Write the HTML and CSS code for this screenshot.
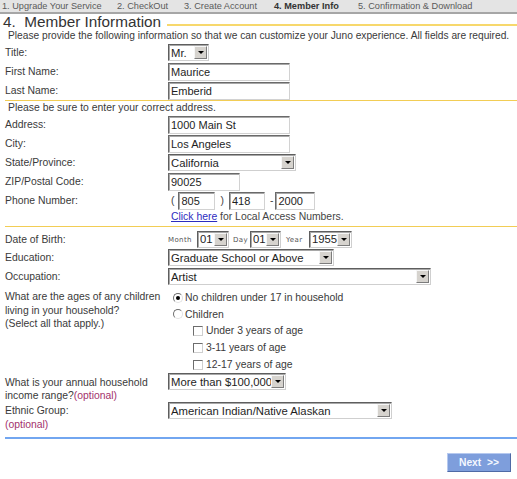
FILE: index.html
```html
<!DOCTYPE html>
<html lang="en">
<head>
<meta charset="utf-8">
<title>Member Information</title>
<link rel="stylesheet" href="styles.css">
</head>
<body>
<div class="steps">
  <span class="step s1">1. Upgrade Your Service</span>
  <span class="step s2">2. CheckOut</span>
  <span class="step s3">3. Create Account</span>
  <span class="step s4 current">4. Member Info</span>
  <span class="step s5">5. Confirmation &amp; Download</span>
</div>

<div class="heading">
  <h1>4.&nbsp; Member Information</h1>
  <span class="rule"></span>
</div>
<p class="intro">Please provide the following information so that we can customize your Juno experience. All fields are required.</p>

<form class="form">
  <div class="row">
    <span class="lbl">Title:</span>
    <span class="sel w-title"><span class="val">Mr.</span><span class="arr"></span></span>
  </div>
  <div class="row">
    <span class="lbl">First Name:</span>
    <input class="txt w-name" type="text" value="Maurice">
  </div>
  <div class="row">
    <span class="lbl">Last Name:</span>
    <input class="txt w-name" type="text" value="Emberid">
  </div>

  <div class="divider yellow first"></div>
  <p class="note">Please be sure to enter your correct address.</p>

  <div class="row">
    <span class="lbl">Address:</span>
    <input class="txt w-name" type="text" value="1000 Main St">
  </div>
  <div class="row">
    <span class="lbl">City:</span>
    <input class="txt w-name" type="text" value="Los Angeles">
  </div>
  <div class="row">
    <span class="lbl">State/Province:</span>
    <span class="sel w-state"><span class="val">California</span><span class="arr"></span></span>
  </div>
  <div class="row">
    <span class="lbl">ZIP/Postal Code:</span>
    <input class="txt w-zip" type="text" value="90025">
  </div>
  <div class="row">
    <span class="lbl">Phone Number:</span>
    <span class="paren open">(</span>
    <input class="txt w-area" type="text" value="805">
    <span class="paren close">)</span>
    <input class="txt w-pre" type="text" value="418">
    <span class="paren dash">-</span>
    <input class="txt w-num" type="text" value="2000">
  </div>
  <div class="access"><a href="#">Click here</a> for Local Access Numbers.</div>

  <div class="divider yellow second"></div>

  <div class="row dob">
    <span class="lbl">Date of Birth:</span>
    <span class="tiny t-mon">Month</span>
    <span class="sel w-mon"><span class="val">01</span><span class="arr"></span></span>
    <span class="tiny t-day">Day</span>
    <span class="sel w-day"><span class="val">01</span><span class="arr"></span></span>
    <span class="tiny t-year">Year</span>
    <span class="sel w-year"><span class="val">1955</span><span class="arr"></span></span>
  </div>
  <div class="row">
    <span class="lbl">Education:</span>
    <span class="sel w-edu"><span class="val">Graduate School or Above</span><span class="arr"></span></span>
  </div>
  <div class="row">
    <span class="lbl">Occupation:</span>
    <span class="sel w-occ"><span class="val">Artist</span><span class="arr"></span></span>
  </div>

  <div class="row tall kids">
    <span class="lbl multi">What are the ages of any children<br>living in your household?<br>(Select all that apply.)</span>
    <div class="opts">
      <label class="opt o1"><span class="radio on"></span>No children under 17 in household</label>
      <label class="opt o2"><span class="radio"></span>Children</label>
      <label class="opt sub"><span class="check"></span>Under 3 years of age</label>
      <label class="opt sub"><span class="check"></span>3-11 years of age</label>
      <label class="opt sub"><span class="check"></span>12-17 years of age</label>
    </div>
  </div>

  <div class="row tall income">
    <span class="lbl multi">What is your annual household<br>income range?<span class="optional">(optional)</span></span>
    <span class="sel w-inc"><span class="val">More than $100,000</span><span class="arr"></span></span>
  </div>
  <div class="row tall ethnic">
    <span class="lbl multi">Ethnic Group:<br><span class="optional">(optional)</span></span>
    <span class="sel w-eth"><span class="val">American Indian/Native Alaskan</span><span class="arr"></span></span>
  </div>

  <div class="divider blue"></div>

  <div class="actions">
    <button type="button" class="next">Next&nbsp; &gt;&gt;</button>
  </div>
</form>
</body>
</html>
```

FILE: styles.css
```css
* { box-sizing: border-box; }

body {
  margin: 0;
  width: 517px;
  background: #fff;
  color: #3a3a3a;
  font-family: "Liberation Sans", Arial, sans-serif;
}

/* step bar */
.steps {
  display: flex;
  height: 14px;
  padding-left: 2px;
  background: #e4e4e4;
  border-bottom: 2px solid #a6a6a6;
  font-size: 9.2px;
  line-height: 12px;
  color: #5a5a5a;
}
.step { flex: none; white-space: nowrap; }
.s1 { width: 115px; }
.s2 { width: 67px; }
.s3 { width: 90px; }
.s4 { width: 84px; }
.current { font-weight: bold; color: #333; }

/* heading */
.heading {
  display: flex;
  align-items: flex-start;
  padding-left: 3px;
}
.heading h1 {
  margin: 0;
  font-size: 15.3px;
  font-weight: normal;
  line-height: 16px;
  color: #333;
  white-space: nowrap;
}
.heading .rule {
  flex: 1;
  height: 2px;
  margin: 10px 0 0 6px;
  background: #f7d86c;
}

.intro {
  margin: 0;
  height: 12px;
  padding-left: 8px;
  font-size: 10.2px;
  line-height: 12px;
  white-space: nowrap;
}

/* form */
.form { margin: 0; padding-top: 1px; }

.row {
  display: flex;
  align-items: center;
  height: 19px;
  padding-left: 5px;
}
.lbl {
  flex: none;
  width: 163px;
  font-size: 10.4px;
  line-height: 13px;
}

.txt {
  height: 18px;
  margin: 0;
  padding: 0 2px;
  border: 1px solid;
  border-color: #6a6a6a #d2d2d2 #d2d2d2 #6a6a6a;
  box-shadow: inset 1px 1px 0 #a8a8a8;
  background: #fff;
  color: #1e1e1e;
  font-family: "Liberation Sans", Arial, sans-serif;
  font-size: 11px;
  outline: none;
}
.w-name { width: 122px; }
.w-zip { width: 72px; }
.w-area { width: 37px; }
.w-pre { width: 36px; }
.w-num { width: 40px; }

.paren { font-size: 10.4px; color: #444; }
.open { margin: 0 4px 0 3px; }
.close { margin: 0 5px 0 5px; }
.dash { margin: 0 2px 0 5px; }

.sel {
  display: flex;
  align-items: center;
  height: 17px;
  padding: 0 1px 0 2px;
  border: 1px solid;
  border-color: #5e5e5e #cfcfcf #cfcfcf #5e5e5e;
  box-shadow: inset 1px 1px 0 #a8a8a8;
  background: #fff;
  color: #1e1e1e;
  font-size: 11.3px;
  white-space: nowrap;
}
.sel .val { flex: 1; overflow: hidden; line-height: 14px; }
.arr {
  flex: none;
  display: flex;
  align-items: center;
  justify-content: center;
  width: 13px;
  height: 13px;
  background: #d6d3ce;
  border: 1px solid;
  border-color: #f6f6f6 #7c7c7c #7c7c7c #f6f6f6;
}
.arr::before {
  content: "";
  border-left: 3px solid transparent;
  border-right: 3px solid transparent;
  border-top: 3px solid #000;
}

.w-title { width: 41px; }
.w-state { width: 128px; }
.w-mon { width: 32px; }
.w-day { width: 31px; }
.w-year { width: 43px; }
.w-edu { width: 166px; }
.w-occ { width: 263px; }
.w-inc { width: 118px; }
.w-eth { width: 224px; }

.access {
  height: 14px;
  padding-left: 171px;
  font-size: 10.4px;
  line-height: 13px;
  color: #444;
}
.access a { color: #2c2cc0; text-decoration: underline; }

.divider { margin-left: 5px; }
.yellow { height: 1px; background: #f2cd55; }
.divider.first { margin-top: 0; }
.divider.second { margin-top: 2px; margin-bottom: 3px; }
.blue { height: 2px; margin-top: 5px; background: #72a6f0; }

.note {
  margin: 0;
  height: 14px;
  padding-left: 8px;
  font-size: 10.4px;
  line-height: 13px;
}

/* date of birth */
.tiny {
  flex: none;
  font-family: "DejaVu Sans", Verdana, sans-serif;
  font-size: 7px;
  letter-spacing: 0.4px;
  color: #555;
  padding-top: 2px;
}
.t-mon { width: 29px; }
.t-day { width: 17px; margin-left: 4px; }
.t-year { width: 23px; margin-left: 5px; }
.dob { height: 18px; }

/* children */
.row.tall { height: auto; align-items: flex-start; }
.lbl.multi { line-height: 13.5px; }
.kids { padding-top: 0; }
.kids .lbl { padding-top: 4px; }
.opts { display: flex; flex-direction: column; padding-top: 3px; }
.opt {
  display: flex;
  align-items: center;
  height: 17px;
  padding-left: 5px;
  font-size: 10.4px;
  color: #3a3a3a;
}
.opt.o2 { height: 16px; }
.opt.sub { padding-left: 25px; }

.radio {
  flex: none;
  position: relative;
  width: 10px;
  height: 10px;
  margin-right: 2px;
  border: 1px solid;
  border-color: #6d6d6d #e2e2e2 #e2e2e2 #6d6d6d;
  border-radius: 50%;
  background: #fff;
}
.radio.on::after {
  content: "";
  position: absolute;
  left: 2px;
  top: 2px;
  width: 4px;
  height: 4px;
  border-radius: 50%;
  background: #000;
}
.check {
  flex: none;
  width: 10px;
  height: 10px;
  margin-right: 3px;
  border: 1px solid;
  border-color: #6d6d6d #cfcfcf #cfcfcf #6d6d6d;
  background: #fff;
}

.income .lbl { padding-top: 3px; line-height: 13px; height: 29px; }
.ethnic .lbl { padding-top: 2px; line-height: 14px; height: 30px; }
.optional { color: #a3326c; }

/* actions */
.actions {
  display: flex;
  justify-content: flex-end;
  padding: 14px 6px 0 0;
}
.next {
  width: 64px;
  height: 19px;
  margin: 0;
  padding: 0;
  border: 1px solid;
  border-color: #b6c9ef #4f6aa6 #4f6aa6 #b6c9ef;
  background: #7e9edc;
  color: #f4f7ff;
  font-family: "Liberation Sans", Arial, sans-serif;
  font-size: 10.3px;
  font-weight: bold;
}
```
